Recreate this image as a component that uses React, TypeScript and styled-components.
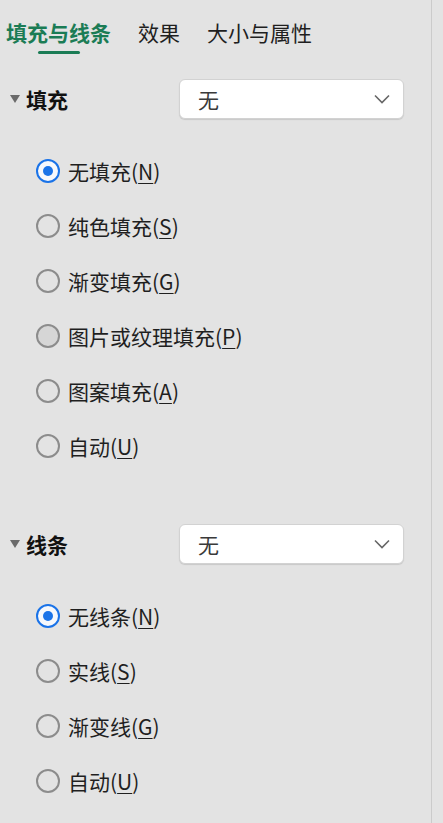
import styled, { createGlobalStyle } from "styled-components";

const GlobalStyle = createGlobalStyle`
  html, body {
    margin: 0;
    padding: 0;
    background: #e3e3e3;
  }
  body {
    font-family: "Noto Sans CJK SC", "Noto Sans", sans-serif;
    color: #1f1f1f;
  }
`;

const Panel = styled.div`
  width: 432px;
  min-height: 823px;
  border-right: 1px solid #cbcbcb;
  box-sizing: border-box;
  display: flex;
  flex-direction: column;
`;

const TabBar = styled.div`
  display: flex;
  gap: 27px;
  padding: 18px 0 0 6px;
`;

const Tab = styled.div<{ $active?: boolean }>`
  display: flex;
  flex-direction: column;
  align-items: center;
  font-size: 21px;
  line-height: 28px;
  font-weight: ${(p) => (p.$active ? 700 : 400)};
  color: ${(p) => (p.$active ? "#1b7c55" : "#1f1f1f")};
  &::after {
    content: "";
    margin-top: 5px;
    width: 42px;
    height: 3px;
    border-radius: 2px;
    background: ${(p) => (p.$active ? "#1b7c55" : "transparent")};
  }
`;

const Section = styled.section<{ $top: number }>`
  margin-top: ${(p) => p.$top}px;
`;

const HeaderRow = styled.div`
  display: flex;
  align-items: center;
  padding-left: 10px;
`;

const HeaderLabel = styled.div`
  width: 169px;
  display: flex;
  align-items: center;
  gap: 6px;
  font-size: 21px;
  font-weight: 700;
  color: #111;
`;

const Caret = styled.span`
  width: 0;
  height: 0;
  border-left: 5px solid transparent;
  border-right: 5px solid transparent;
  border-top: 8px solid #6a6a6a;
`;

const Select = styled.div`
  width: 225px;
  height: 40px;
  box-sizing: border-box;
  display: flex;
  align-items: center;
  justify-content: space-between;
  padding: 0 13px 0 18px;
  background: #fff;
  border: 1px solid #d2d2d2;
  border-radius: 6px;
  box-shadow: 0 1px 1px rgba(0, 0, 0, 0.12);
  font-size: 21px;
  color: #3a3a3a;
`;

const RadioList = styled.div`
  margin-top: 24px;
  display: flex;
  flex-direction: column;
`;

const RadioRow = styled.label`
  height: 55px;
  display: flex;
  align-items: center;
  gap: 8px;
  padding-left: 36px;
  font-size: 21px;
  color: #1f1f1f;
`;

const Circle = styled.span<{ $checked?: boolean; $hover?: boolean }>`
  width: 24px;
  height: 24px;
  box-sizing: border-box;
  border-radius: 50%;
  border: 2px solid ${(p) => (p.$checked ? "#1a73e8" : "#8c8c8c")};
  background: ${(p) => (p.$checked ? "#f6f8fc" : p.$hover ? "#d6d6d6" : "transparent")};
  display: flex;
  align-items: center;
  justify-content: center;
  &::after {
    content: "";
    width: 10px;
    height: 10px;
    border-radius: 50%;
    background: ${(p) => (p.$checked ? "#1a73e8" : "transparent")};
  }
`;

const Key = styled.span`
  text-decoration: underline;
  text-underline-offset: 3px;
  text-decoration-thickness: 1px;
`;

function Chevron() {
  return (
    <svg width="16" height="10" viewBox="0 0 16 10" fill="none">
      <path d="M1 1.5 L8 8.5 L15 1.5" stroke="#666" strokeWidth="1.6" />
    </svg>
  );
}

type Option = { label: string; key: string; checked?: boolean; hover?: boolean };

const fillOptions: Option[] = [
  { label: "无填充", key: "N", checked: true },
  { label: "纯色填充", key: "S" },
  { label: "渐变填充", key: "G" },
  { label: "图片或纹理填充", key: "P", hover: true },
  { label: "图案填充", key: "A" },
  { label: "自动", key: "U" },
];

const lineOptions: Option[] = [
  { label: "无线条", key: "N", checked: true },
  { label: "实线", key: "S" },
  { label: "渐变线", key: "G" },
  { label: "自动", key: "U" },
];

function OptionGroup({
  title,
  options,
  top,
}: {
  title: string;
  options: Option[];
  top: number;
}) {
  return (
    <Section $top={top}>
      <HeaderRow>
        <HeaderLabel>
          <Caret />
          {title}
        </HeaderLabel>
        <Select>
          无
          <Chevron />
        </Select>
      </HeaderRow>
      <RadioList>
        {options.map((o) => (
          <RadioRow key={o.label}>
            <Circle $checked={o.checked} $hover={o.hover} />
            <span>
              {o.label}(<Key>{o.key}</Key>)
            </span>
          </RadioRow>
        ))}
      </RadioList>
    </Section>
  );
}

export default function App() {
  return (
    <>
      <GlobalStyle />
      <Panel>
        <TabBar>
          <Tab $active>填充与线条</Tab>
          <Tab>效果</Tab>
          <Tab>大小与属性</Tab>
        </TabBar>
        <OptionGroup title="填充" options={fillOptions} top={25} />
        <OptionGroup title="线条" options={lineOptions} top={51} />
      </Panel>
    </>
  );
}
